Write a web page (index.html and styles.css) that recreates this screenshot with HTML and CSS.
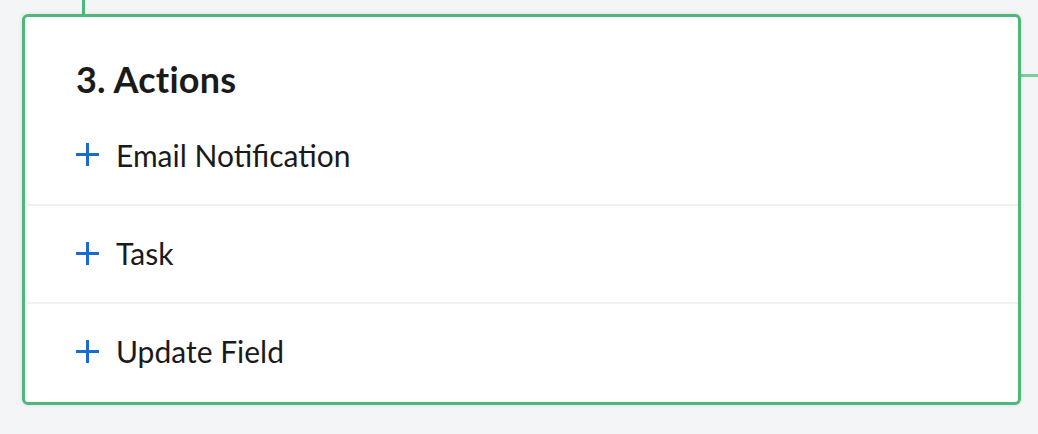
FILE: index.html
```html
<!DOCTYPE html>
<html lang="en">
<head>
<meta charset="utf-8">
<title>Actions</title>
<link rel="stylesheet" href="styles.css">
</head>
<body>
<div class="canvas">
  <span class="connector connector-top"></span>
  <span class="connector connector-right"></span>
  <section class="card">
    <h2 class="card-title">3. Actions</h2>
    <ul class="action-list">
      <li class="action-item">
        <svg class="plus" viewBox="0 0 23 23" aria-hidden="true"><rect x="10" y="0" width="3" height="23"/><rect x="0" y="10" width="23" height="3"/></svg>
        <span class="action-label">Email Notification</span>
      </li>
      <li class="action-item">
        <svg class="plus" viewBox="0 0 23 23" aria-hidden="true"><rect x="10" y="0" width="3" height="23"/><rect x="0" y="10" width="23" height="3"/></svg>
        <span class="action-label">Task</span>
      </li>
      <li class="action-item">
        <svg class="plus" viewBox="0 0 23 23" aria-hidden="true"><rect x="10" y="0" width="3" height="23"/><rect x="0" y="10" width="23" height="3"/></svg>
        <span class="action-label">Update Field</span>
      </li>
    </ul>
  </section>
</div>
</body>
</html>
```
FILE: styles.css
```css
html, body {
  margin: 0;
  padding: 0;
}
body {
  background: #f4f5f7;
  font-family: Lato, "Open Sans", sans-serif;
  color: #1a1a1a;
  width: 1038px;
  height: 434px;
  overflow: hidden;
}
.canvas {
  position: relative;
  padding: 14px 17px 29px 22px;
}
.connector {
  position: absolute;
  background: #4cb97a;
}
.connector-top {
  left: 82px;
  top: 0;
  width: 3px;
  height: 15px;
}
.connector-right {
  left: 1020px;
  top: 74px;
  width: 18px;
  height: 3px;
  background: #7ccd9d;
}
.card {
  position: relative;
  box-sizing: border-box;
  width: 999px;
  height: 391px;
  background: #ffffff;
  border: 3px solid #4cb97a;
  border-radius: 6px;
  box-shadow: 0 0 4px rgba(0, 0, 0, 0.10);
}
.card-title {
  margin: 0;
  padding: 40px 0 0 51px;
  height: 50px;
  font-size: 36px;
  line-height: 44px;
  font-weight: 700;
  letter-spacing: 0.2px;
  color: #1a1a1a;
}
.action-list {
  list-style: none;
  margin: 0;
  padding: 0 0 0 2px;
}
.action-item {
  display: flex;
  align-items: center;
  gap: 17px;
  height: 97px;
  padding-left: 49px;
  padding-bottom: 2px;
  box-sizing: border-box;
  border-top: 2px solid #eff1f4;
}
.action-item:first-child {
  border-top: none;
  height: 97px;
}
.action-item + .action-item {
  height: 98px;
}
.plus {
  width: 23px;
  height: 23px;
  flex: none;
  fill: #1a6acf;
  shape-rendering: crispEdges;
}
.action-label {
  font-size: 30px;
  line-height: 36px;
  color: #1a1a1a;
}
```
